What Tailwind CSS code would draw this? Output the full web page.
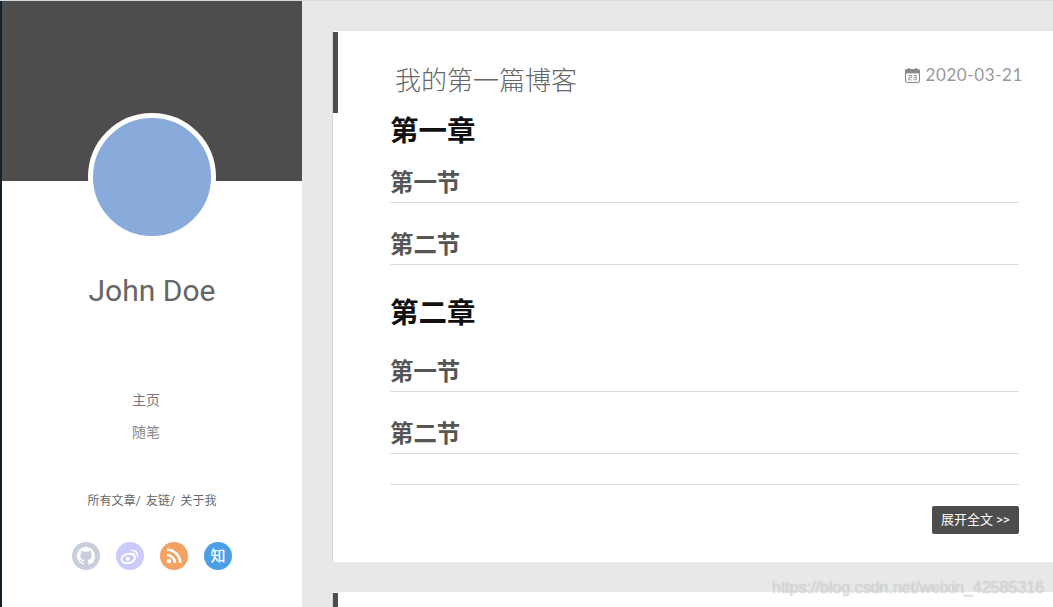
<!doctype html>
<html>
<head>
<meta charset="UTF-8" />
<script src="https://cdn.jsdelivr.net/npm/@tailwindcss/browser@4"></script>
<title>我的第一篇博客</title>
</head>
<body class="relative h-[607px] w-[1053px] overflow-hidden bg-[#e8e8e8] font-['Roboto','Noto_Sans_CJK_SC',sans-serif]">
<div class="flex h-full border-t border-[#d8dbe2]">
  <!-- sidebar -->
  <aside class="h-full w-[302px] shrink-0 border-l-2 border-[#14222e] bg-white">
    <div class="relative h-[180px] bg-[#4d4d4d]">
      <div class="absolute left-[86px] top-[112px] size-[128px] rounded-full border-[5px] border-white bg-[#89abdc]"></div>
    </div>
    <h2 class="mt-[90px] text-center text-[30px] leading-[40px] text-[#666]">John Doe</h2>
    <nav class="mt-[79px] flex flex-col items-center pr-[12px] text-sm text-[#777]">
      <a class="h-8 leading-5">主页</a>
      <a class="h-8 leading-5 text-[#888]">随笔</a>
    </nav>
    <div class="mt-[37px] text-center text-xs leading-5 tracking-[0.1px] text-[#666] [word-spacing:2px]">所有文章/ 友链/ 关于我</div>
    <div class="mt-[31px] flex justify-center gap-4">
      <span class="flex size-7 items-center justify-center rounded-full bg-[#c8cedb]">
        <svg class="size-[18px]" viewBox="0 0 16 16" fill="#fff"><path d="M8 0C3.58 0 0 3.58 0 8c0 3.54 2.29 6.53 5.47 7.59.4.07.55-.17.55-.38v-1.34c-2.23.48-2.69-1.07-2.69-1.07-.36-.92-.89-1.17-.89-1.17-.73-.5.05-.49.05-.49.8.06 1.23.83 1.23.83.71 1.23 1.87.87 2.33.66.07-.52.28-.87.5-1.07-1.78-.2-3.64-.89-3.64-3.95 0-.87.31-1.59.82-2.15-.08-.2-.36-1.02.08-2.12 0 0 .67-.21 2.2.82a7.7 7.7 0 0 1 4 0c1.53-1.04 2.2-.82 2.2-.82.44 1.1.16 1.92.08 2.12.51.56.82 1.27.82 2.15 0 3.07-1.87 3.75-3.65 3.95.29.25.54.73.54 1.48v2.2c0 .21.15.46.55.38A8 8 0 0 0 16 8c0-4.42-3.58-8-8-8z"/></svg>
      </span>
      <span class="flex size-7 items-center justify-center rounded-full bg-[#cbcaff]">
        <svg class="size-[20px]" viewBox="0 0 20 20" fill="none" stroke="#fff"><ellipse cx="8.2" cy="12.6" rx="6.8" ry="4.6" stroke-width="2" transform="rotate(-12 8.2 12.6)"/><circle cx="7.8" cy="12.8" r="2" fill="#fff" stroke="none"/><path d="M12 4.5a5 5 0 0 1 5.6 5.6" stroke-width="1.6" stroke-linecap="round"/><path d="M12.2 7.5a2.4 2.4 0 0 1 2.7 2.7" stroke-width="1.4" stroke-linecap="round"/></svg>
      </span>
      <span class="flex size-7 items-center justify-center rounded-full bg-[#f4a164]">
        <svg class="size-[18px]" viewBox="0 0 18 18" fill="none" stroke="#fff" stroke-width="2.6"><circle cx="4" cy="14" r="2.3" fill="#fff" stroke="none"/><path d="M2 8a8 8 0 0 1 8 8"/><path d="M2 2.8A13.2 13.2 0 0 1 15.2 16"/></svg>
      </span>
      <span class="flex size-7 items-center justify-center rounded-full bg-[#4c9fe4] text-[15px] font-medium leading-none text-white">知</span>
    </div>
  </aside>

  <!-- posts -->
  <main class="min-w-0 flex-1 pl-[30px] pt-[30px]">
    <article class="relative h-[531px] border-l border-[#d5d5d5] bg-white pl-[57px] pr-[34px]">
      <div class="absolute left-0 top-[1px] h-[81px] w-[5px] bg-[#4d4d4d]"></div>
      <header class="flex h-[83px] items-start justify-between">
        <h1 class="ml-[5px] mt-[32px] text-[26px] font-light leading-[36px] text-[#666]">我的第一篇博客</h1>
        <div class="mr-[-4px] mt-[32px] flex items-center gap-[5px] font-['Lato','Noto_Sans_CJK_SC',sans-serif] text-[17px] leading-6 tracking-[0.6px] text-[#999]">
          <svg class="size-[15px]" viewBox="0 0 14 14"><rect x="0.5" y="1.5" width="13" height="12" rx="1.5" fill="#fff" stroke="#888"/><rect x="0.5" y="1.5" width="13" height="3.5" fill="#888"/><rect x="3" y="0" width="1.5" height="3" fill="#888"/><rect x="9.5" y="0" width="1.5" height="3" fill="#888"/><path d="M3.5 7h2.5v2h-2.5v2h2.5M8 7h2.5v4H8M8 9h2.5" fill="none" stroke="#888" stroke-width="0.8"/></svg>
          <span>2020-03-21</span>
        </div>
      </header>
      <div class="flex flex-col">
        <h2 class="h-[37px] text-[28.5px] font-bold leading-[36px] text-[#111]">第一章</h2>
        <h3 class="mt-[4px] h-[48px] border-b border-[#ddd] pt-[11px] text-[23.4px] font-bold leading-[34px] text-[#555]">第一节</h3>
        <h3 class="mt-[14px] h-[48px] border-b border-[#ddd] pt-[11px] text-[23.4px] font-bold leading-[34px] text-[#555]">第二节</h3>
        <h2 class="mt-[31px] h-[37px] text-[28.5px] font-bold leading-[36px] text-[#111]">第二章</h2>
        <h3 class="mt-[11px] h-[48px] border-b border-[#ddd] pt-[11px] text-[23.4px] font-bold leading-[34px] text-[#555]">第一节</h3>
        <h3 class="mt-[14px] h-[48px] border-b border-[#ddd] pt-[11px] text-[23.4px] font-bold leading-[34px] text-[#555]">第二节</h3>
        <hr class="mt-[30px] border-[#ddd]" />
        <div class="mt-[21px] flex justify-end">
          <a class="flex h-7 w-[87px] items-center justify-center rounded-[2px] bg-[#4d4d4d] text-[13px] text-white">展开全文 &gt;&gt;</a>
        </div>
      </div>
    </article>
    <article class="relative mt-[30px] h-[15px] overflow-hidden border-l border-[#d5d5d5] bg-white">
      <div class="absolute left-0 top-[1px] h-[81px] w-[5px] bg-[#4d4d4d]"></div>
    </article>
  </main>
</div>
<div class="absolute left-[772px] top-[578px] font-['Liberation_Sans',sans-serif] text-[16px] leading-5 text-white/50 [text-shadow:0_0_1px_rgba(120,120,120,0.6)]">https://blog.csdn.net/weixin_42585316</div>
</body>
</html>
